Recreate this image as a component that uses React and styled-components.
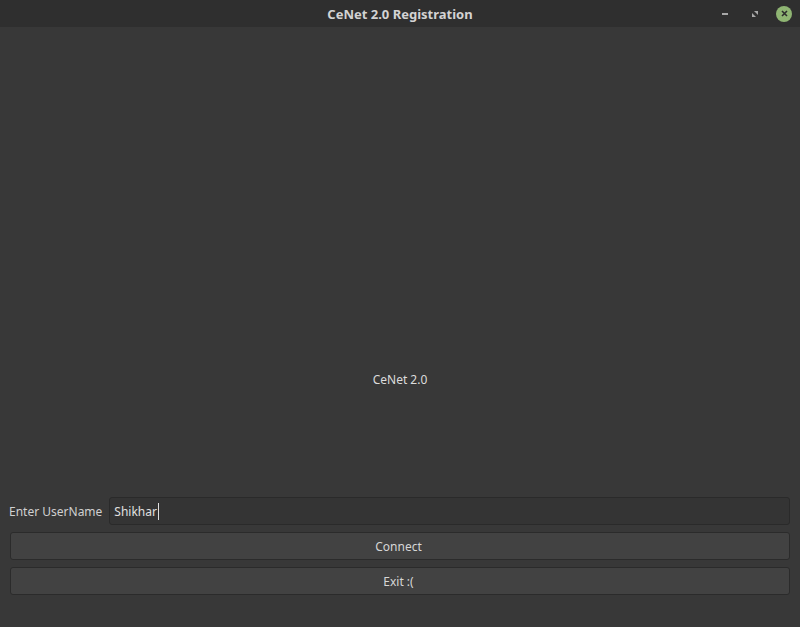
import React from "react";
import styled, { createGlobalStyle } from "styled-components";

const GlobalStyle = createGlobalStyle`
  *, *::before, *::after {
    box-sizing: border-box;
  }
  html, body {
    margin: 0;
    padding: 0;
    background: #383838;
  }
  body {
    font-family: "Noto Sans", "DejaVu Sans", sans-serif;
    font-size: 12px;
    color: #dcdcdc;
  }
`;

const Window = styled.div`
  width: 800px;
  height: 627px;
  display: flex;
  flex-direction: column;
  background: #383838;
  overflow: hidden;
`;

const TitleBar = styled.div`
  height: 27px;
  flex: 0 0 27px;
  background: #2f2f2f;
  display: grid;
  grid-template-columns: 1fr auto 1fr;
  align-items: center;
`;

const Title = styled.div`
  grid-column: 2;
  font-weight: bold;
  font-size: 13px;
  color: #d3d3d3;
  padding-top: 1px;
`;

const Controls = styled.div`
  grid-column: 3;
  justify-self: end;
  display: flex;
  align-items: center;
  gap: 12px;
  padding-right: 8px;
`;

const CtlButton = styled.div`
  width: 18px;
  height: 18px;
  display: flex;
  align-items: center;
  justify-content: center;
`;

const CloseButton = styled.div`
  width: 16px;
  height: 16px;
  border-radius: 50%;
  background: #8fb573;
  display: flex;
  align-items: center;
  justify-content: center;
`;

const Body = styled.div`
  flex: 1;
  display: flex;
  flex-direction: column;
  padding: 0 10px 32px 10px;
  gap: 7px;
`;

const Banner = styled.div`
  flex: 1;
  display: flex;
  align-items: flex-end;
  justify-content: center;
  padding-bottom: 102px;
  color: #dcdcdc;
`;

const FormRow = styled.div`
  display: flex;
  align-items: center;
  gap: 7px;
  margin-left: -1px;
`;

const Label = styled.label`
  color: #d0d0d0;
  white-space: nowrap;
`;

const Input = styled.div`
  flex: 1;
  height: 28px;
  border: 1px solid #2a2a2a;
  border-radius: 3px;
  background: #343434;
  display: flex;
  align-items: center;
  padding-left: 4px;
  color: #e0e0e0;
`;

const Caret = styled.span`
  display: inline-block;
  width: 1px;
  height: 17px;
  background: #e0e0e0;
  margin-left: 1px;
`;

const Button = styled.button`
  height: 28px;
  width: 100%;
  border: 1px solid #2b2b2b;
  border-radius: 3px;
  background: #424242;
  color: #d6d6d6;
  font-family: "Noto Sans", "DejaVu Sans", sans-serif;
  font-size: 12px;
  padding: 0 3px 0 0;
`;

export default function App() {
  return (
    <>
      <GlobalStyle />
      <Window>
        <TitleBar>
          <Title>CeNet 2.0 Registration</Title>
          <Controls>
            <CtlButton>
              <svg width="8" height="4" viewBox="0 0 8 4">
                <rect x="1" y="1" width="6" height="2" fill="#a8a8a8" />
              </svg>
            </CtlButton>
            <CtlButton>
              <svg width="8" height="8" viewBox="0 0 8 8">
                <polygon points="3,1 7,1 7,5" fill="#a8a8a8" />
                <polygon points="1,3 1,7 5,7" fill="#a8a8a8" />
              </svg>
            </CtlButton>
            <CloseButton>
              <svg width="7" height="7" viewBox="0 0 7 7">
                <path d="M1 1 L6 6 M6 1 L1 6" stroke="#2d2d2d" strokeWidth="1.6" />
              </svg>
            </CloseButton>
          </Controls>
        </TitleBar>
        <Body>
          <Banner>CeNet 2.0</Banner>
          <FormRow>
            <Label>Enter UserName</Label>
            <Input>
              Shikhar<Caret />
            </Input>
          </FormRow>
          <Button>Connect</Button>
          <Button>Exit :(</Button>
        </Body>
      </Window>
    </>
  );
}
